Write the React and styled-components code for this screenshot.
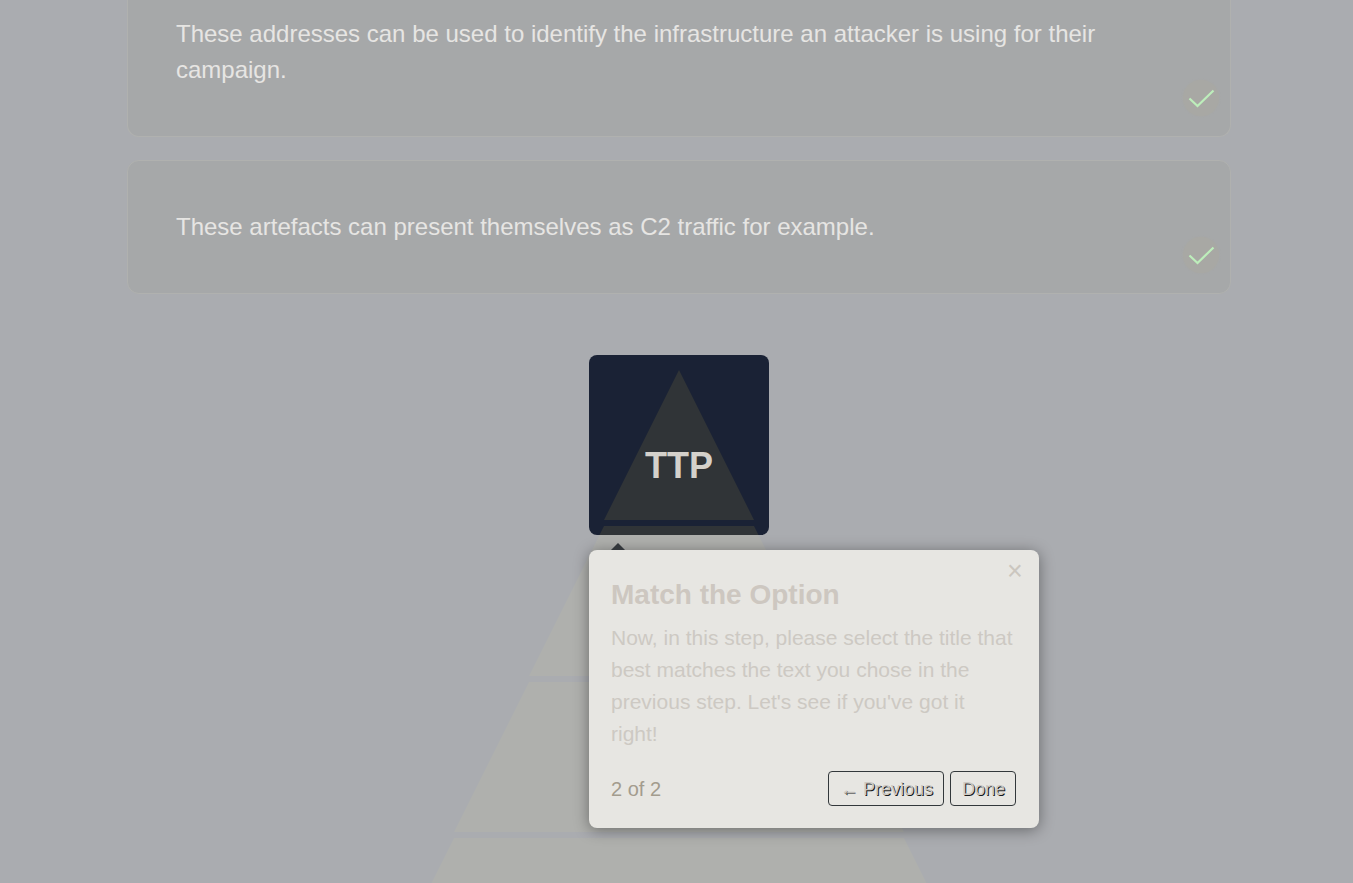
import React from "react";
import styled, { createGlobalStyle } from "styled-components";

const GlobalStyle = createGlobalStyle`
  * { box-sizing: border-box; }
  body {
    margin: 0;
    background: #aaacb0;
    font-family: "Liberation Sans", Arial, sans-serif;
  }
`;

const Page = styled.main`
  height: 100vh;
  overflow: hidden;
  display: flex;
  flex-direction: column;
  padding: 0 122px 0 127px;
`;

const CardList = styled.section`
  flex: none;
  display: flex;
  flex-direction: column;
  gap: 23px;
`;

const Card = styled.article`
  position: relative;
  padding: ${(p) => (p.$continued ? "16px" : "48px")} 48px 48px;
  border: 1px solid #b0b1af;
  border-top-width: ${(p) => (p.$continued ? "0" : "1px")};
  border-radius: ${(p) => (p.$continued ? "0 0 12px 12px" : "12px")};
  background: #a6a8a9;
`;

const CardText = styled.p`
  margin: 0;
  font-size: 24px;
  line-height: 36px;
  color: #e6e5e3;
`;

const CheckBadge = styled.span`
  position: absolute;
  right: 11px;
  bottom: 20px;
  width: 36px;
  height: 36px;
  border-radius: 50%;
  background: #a8a8a4;
  box-shadow: 0 0 2px #a8a8a4;

  svg { display: block; }
`;

const Stage = styled.section`
  position: relative;
  flex: none;
  margin-top: 76px;
  display: flex;
  justify-content: center;
`;

const PyramidSvg = styled.svg`
  flex: none;
  display: block;
  fill: ${(p) => p.$tone};
`;

const Spotlight = styled.div`
  position: absolute;
  top: -15px;
  left: calc(50% - 90px);
  width: 180px;
  height: 180px;
  padding-top: 15px;
  display: flex;
  justify-content: center;
  overflow: hidden;
  border-radius: 8px;
  background: #1a2235;
`;

const TierLabel = styled.text`
  font-size: 36px;
  font-weight: 700;
  text-anchor: middle;
  fill: #d4d1cb;
`;

const Popover = styled.div`
  position: absolute;
  top: 180px;
  left: calc(50% - 90px);
  width: 450px;
  padding: 26px 23px 22px 22px;
  border-radius: 8px;
  background: #e7e6e2;
  box-shadow: 0 2px 15px rgba(0, 0, 0, 0.4);
`;

const Arrow = styled.span`
  position: absolute;
  top: -7px;
  left: 22px;
  border: 7px solid transparent;
  border-top-width: 0;
  border-bottom-color: #33373b;
`;

const CloseButton = styled.button`
  position: absolute;
  top: 0;
  right: 0;
  width: 48px;
  height: 42px;
  padding: 0;
  border: 0;
  background: none;
  font: 27px "Liberation Sans", Arial, sans-serif;
  color: #cbc6bf;
`;

const Title = styled.h2`
  margin: 0;
  font-size: 28px;
  line-height: 38px;
  color: #cdc7c0;
`;

const Description = styled.p`
  margin: 8px 0 0;
  font-size: 21px;
  line-height: 32px;
  color: #cdc9c3;
`;

const Footer = styled.footer`
  display: flex;
  align-items: center;
  gap: 6px;
  margin-top: 21px;
`;

const Progress = styled.span`
  margin-right: auto;
  font-size: 20px;
  line-height: 30px;
  color: #a39c8e;
`;

const NavButton = styled.button`
  height: 35px;
  padding: 1px 10px 0 11px;
  border: 1px solid #33383b;
  border-radius: 4px;
  background: #e7e6e2;
  font: 18px "Liberation Sans", Arial, sans-serif;
  color: #cdc9c3;
  text-shadow: 1px 1px 0 #17191b;
`;

function Check() {
  return (
    <CheckBadge role="img" aria-label="Completed">
      <svg width="36" height="36" viewBox="0 0 36 36">
        <path d="M6.5 18.5 14.5 26 30.5 10.5" fill="none" stroke="#bdeebb" strokeWidth="2.2" />
      </svg>
    </CheckBadge>
  );
}

function Pyramid({ tone, label }) {
  return (
    <PyramidSvg $tone={tone} width="600" height="618" viewBox="0 0 600 618" aria-hidden={!label}>
      <polygon points="300,0 375,150 225,150" />
      <polygon points="225,156 375,156 450,306 150,306" />
      <polygon points="150,312 450,312 525,462 75,462" />
      <polygon points="75,468 525,468 600,618 0,618" />
      {label && <TierLabel x="300" y="108">{label}</TierLabel>}
    </PyramidSvg>
  );
}

export default function App() {
  return (
    <>
      <GlobalStyle />
      <Page>
        <CardList>
          <Card $continued>
            <CardText>
              These addresses can be used to identify the infrastructure an attacker is using for their campaign.
            </CardText>
            <Check />
          </Card>
          <Card>
            <CardText>These artefacts can present themselves as C2 traffic for example.</CardText>
            <Check />
          </Card>
        </CardList>
        <Stage>
          <Pyramid tone="#afb0ad" />
          <Spotlight>
            <Pyramid tone="#303437" label="TTP" />
          </Spotlight>
          <Popover role="dialog" aria-labelledby="tour-title">
            <Arrow />
            <CloseButton aria-label="Close">×</CloseButton>
            <Title id="tour-title">Match the Option</Title>
            <Description>
              Now, in this step, please select the title that best matches the text you chose in the previous step.
              Let's see if you've got it right!
            </Description>
            <Footer>
              <Progress>2 of 2</Progress>
              <NavButton>← Previous</NavButton>
              <NavButton>Done</NavButton>
            </Footer>
          </Popover>
        </Stage>
      </Page>
    </>
  );
}
